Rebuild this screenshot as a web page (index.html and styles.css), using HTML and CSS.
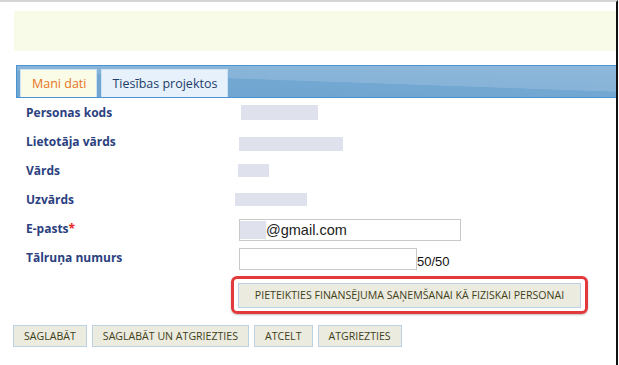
FILE: index.html
```html
<!DOCTYPE html>
<html lang="lv">
<head>
  <meta charset="UTF-8" />
  <meta name="viewport" content="width=device-width, initial-scale=1.0"/>
  <title>Mani dati</title>
  <link rel="stylesheet" href="styles.css">
</head>
<body>
  <div class="page">
    <div class="notice"></div>

    <div class="tabs">
      <div class="tab active">Mani dati</div>
      <div class="tab">Tiesības projektos</div>
    </div>

    <div class="form">
      <div class="row">
        <div class="label">Personas kods</div>
        <div class="value"><span class="hidden hidden-code"></span></div>
      </div>
      <div class="row">
        <div class="label">Lietotāja vārds</div>
        <div class="value"><span class="hidden hidden-user"></span></div>
      </div>
      <div class="row">
        <div class="label">Vārds</div>
        <div class="value"><span class="hidden hidden-name"></span></div>
      </div>
      <div class="row">
        <div class="label">Uzvārds</div>
        <div class="value"><span class="hidden hidden-surname"></span></div>
      </div>
      <div class="row">
        <div class="label">E-pasts<span class="req">*</span></div>
        <div class="value">
          <div class="input input-email"><span class="hidden hidden-mail"></span>@gmail.com</div>
        </div>
      </div>
      <div class="row">
        <div class="label">Tālruņa numurs</div>
        <div class="value">
          <div class="input input-phone"></div>
          <span class="counter">50/50</span>
        </div>
      </div>

      <div class="apply">
        <div class="highlight">
          <button class="btn btn-wide">Pieteikties finansējuma saņemšanai kā fiziskai personai</button>
        </div>
      </div>
    </div>

    <div class="actions">
      <button class="btn">Saglabāt</button>
      <button class="btn">Saglabāt un atgriezties</button>
      <button class="btn">Atcelt</button>
      <button class="btn">Atgriezties</button>
    </div>
  </div>
</body>
</html>
```

FILE: styles.css
```css
body {
  margin: 0;
  background-color: #fff;
  font-family: 'Open Sans', sans-serif;
}
.page {
  border-top: 2px solid #d6d6d6;
  border-right: 2px solid #111;
  box-sizing: border-box;
  width: 618px;
  height: 365px;
}
.notice {
  margin: 9px 0 0 14px;
  height: 40px;
  background-color: #f8fbe7;
}
.tabs {
  margin: 14px 0 0 16px;
  height: 33px;
  box-sizing: border-box;
  border: 1px solid #4c93d2;
  border-right: none;
  background: linear-gradient(182deg, #8db8db 0%, #87b3d8 49%, #73a8d2 50%, #6ea4d0 100%);
  display: flex;
  align-items: flex-end;
  padding-left: 3px;
  gap: 4px;
}
.tab {
  height: 28px;
  box-sizing: border-box;
  padding: 0 10px;
  display: flex;
  align-items: center;
  font-size: 12.5px;
  color: #1f3c6c;
  background-color: #e6f1fb;
  border: 1px solid #cfe2f3;
  border-bottom: none;
}
.tab.active {
  color: #e8731f;
  background-color: #fafce7;
  padding: 0 10px 0 11px;
}
.form {
  padding-left: 26px;
}
.row {
  display: flex;
  align-items: center;
  height: 29px;
}
.label {
  width: 209px;
  font-size: 12px;
  font-weight: bold;
  color: #2b4180;
}
.req {
  color: #e8261c;
}
.value {
  display: flex;
  align-items: center;
}
.hidden {
  display: inline-block;
  background-color: #dfe1ec;
}
.hidden-code {
  width: 77px;
  height: 15px;
  margin: 0 0 0 6px;
}
.hidden-user {
  width: 104px;
  height: 14px;
  margin: 4px 0 0 4px;
}
.hidden-name {
  width: 31px;
  height: 13px;
  margin: 0 0 0 3px;
}
.hidden-surname {
  width: 72px;
  height: 13px;
}
.input {
  box-sizing: border-box;
  height: 22px;
  border: 1px solid #c9c9c9;
  background-color: #fff;
  margin-left: 4px;
  display: flex;
  align-items: center;
  font-family: 'Liberation Sans', Arial, sans-serif;
  font-size: 14.5px;
  color: #222;
}
.input-email {
  width: 222px;
  margin-top: 2px;
}
.hidden-mail {
  width: 26px;
  height: 18px;
}
.input-phone {
  width: 178px;
  margin-top: 3px;
}
.counter {
  font-family: 'Liberation Sans', Arial, sans-serif;
  font-size: 13px;
  color: #111;
  margin-top: 7px;
}
.apply {
  padding: 4px 0 0 205px;
}
.highlight {
  display: inline-block;
  border: 3px solid #e23a3c;
  border-radius: 6px;
  padding: 3px 4px;
  box-shadow: 0 1px 2px rgba(0, 0, 0, 0.25);
}
.btn {
  height: 22px;
  box-sizing: border-box;
  padding: 0 10px;
  border: 1px solid #bcd2e4;
  background-color: #ecebe0;
  color: #3f4119;
  font-family: 'Open Sans', sans-serif;
  font-size: 10.6px;
  text-transform: uppercase;
  cursor: pointer;
}
.btn-wide {
  height: 25px;
  width: 343px;
  padding: 0;
}
.actions {
  display: flex;
  gap: 5px;
  padding: 11px 0 0 13px;
}
```
